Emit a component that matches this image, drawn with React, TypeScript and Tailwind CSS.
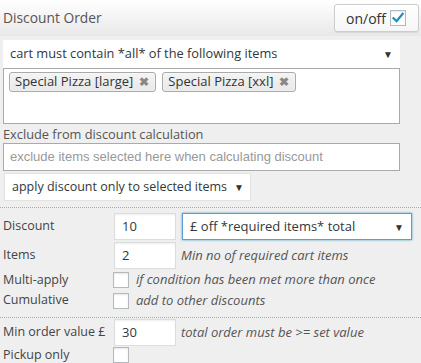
import React from 'react';

const Arrow = () => (
  <span className="text-[10px] leading-none text-[#333]">▼</span>
);

const Box = ({ checked = false }: { checked?: boolean }) => (
  <span className="flex h-4 w-4 items-center justify-center border border-[#b4b9be] bg-white shadow-[inset_0_1px_2px_rgba(0,0,0,0.1)]">
    {checked && (
      <svg width="14" height="14" viewBox="0 0 14 14">
        <path d="M2.5 7.2 L5.6 10.2 L11.6 2.8" fill="none" stroke="#1e8cbe" strokeWidth="2.2" strokeLinecap="square" />
      </svg>
    )}
  </span>
);

const Tag = ({ label }: { label: string }) => (
  <span className="flex h-5 items-center gap-1.5 whitespace-nowrap rounded-[3px] border border-[#aaa] bg-gradient-to-b from-[#f4f4f4] to-[#e8e8e8] pl-[5px] pr-[6px] text-[13px] text-[#333] shadow-[0_0_2px_white_inset]">
    {label}
    <span className="text-[12px] font-bold text-[#888]">✖</span>
  </span>
);

const NumInput = ({ value }: { value: string }) => (
  <div className="flex h-[27px] w-[62px] items-center border border-[#ddd] bg-white pl-[7px] text-[13px] text-[#32373c] shadow-[inset_0_1px_2px_rgba(0,0,0,0.07)]">
    {value}
  </div>
);

const Row = ({ label, children, h }: { label: string; children: React.ReactNode; h: string }) => (
  <div className={`flex items-center whitespace-nowrap ${h}`}>
    <span className="w-[110px] pl-[3px] text-[12.5px] text-[#444]">{label}</span>
    {children}
  </div>
);

export default function App() {
  return (
    <div className="h-[363px] w-[421px] overflow-hidden bg-[#efefef] text-[13px] text-[#444]" style={{ fontFamily: '"Open Sans", sans-serif' }}>
      <div className="flex h-[36px] items-center justify-between bg-gradient-to-b from-white to-[#e8e8e8] pl-[3px] pr-[2px]">
        <span className="text-[13.8px] text-[#555]">Discount Order</span>
        <div className="flex h-[28px] w-[85px] items-center gap-[4px] rounded-[3px] border border-[#ccc] bg-gradient-to-b from-white to-[#f6f6f6] pl-[11px] text-[14px] text-[#333] shadow-[0_1px_1px_rgba(0,0,0,0.08)]">
          on/off
          <Box checked />
        </div>
      </div>

      <div className="px-[3px] pt-[4px]">
        <div className="flex h-[28px] w-[397px] items-center justify-between whitespace-nowrap bg-white pl-[7px] pr-[7px] text-[12.8px] text-[#32373c]">
          cart must contain *all* of the following items
          <Arrow />
        </div>
        <div className="flex h-[56px] w-[397px] items-start gap-[6px] border border-[#aaa] bg-white pl-[5px] pt-[3px]">
          <Tag label="Special Pizza [large]" />
          <Tag label="Special Pizza [xxl]" />
        </div>
        <div className="mt-[1px] text-[12.8px] leading-[18px] text-[#555]">Exclude from discount calculation</div>
        <div className="flex h-[28px] w-[397px] items-center whitespace-nowrap border border-[#aaa] bg-white pl-[6px] text-[13px] text-[#999]" style={{ fontFamily: '"Liberation Sans", Arial, sans-serif' }}>
          exclude items selected here when calculating discount
        </div>
        <div className="ml-[1px] mt-[2px] flex h-[28px] w-[247px] items-center justify-between whitespace-nowrap border border-[#e2e2e2] bg-white pl-[7px] pr-[6px] text-[12.5px] text-[#32373c]">
          apply discount only to selected items
          <Arrow />
        </div>
      </div>

      <div className="mt-[6px] border-t border-dotted border-[#aaa]" />

      <div className="pt-[4px]">
        <Row label="Discount" h="h-[29px]">
          <div className="ml-[4px]"><NumInput value="10" /></div>
          <div className="ml-[6px] flex h-[27px] w-[230px] items-center justify-between border border-[#5b9dd9] bg-white pl-[7px] pr-[7px] text-[13px] text-[#32373c] shadow-[0_0_2px_rgba(30,140,190,0.8)]">
            £ off *required items* total
            <Arrow />
          </div>
        </Row>
        <Row label="Items" h="h-[29px]">
          <div className="ml-[4px]"><NumInput value="2" /></div>
          <span className="ml-[5px] italic text-[#555]">Min no of required cart items</span>
        </Row>
        <Row label="Multi-apply" h="h-[20px]">
          <div className="ml-[3px]"><Box /></div>
          <span className="ml-[7px] italic text-[#555]">if condition has been met more than once</span>
        </Row>
        <Row label="Cumulative" h="h-[21px]">
          <div className="ml-[3px]"><Box /></div>
          <span className="ml-[7px] italic text-[#555]">add to other discounts</span>
        </Row>
      </div>

      <div className="mt-[6px] border-t border-dotted border-[#aaa]" />

      <div className="pt-[1px]">
        <Row label="Min order value £" h="h-[27px]">
          <div className="ml-[4px]"><NumInput value="30" /></div>
          <span className="ml-[5px] italic text-[#555]">total order must be &gt;= set value</span>
        </Row>
        <Row label="Pickup only" h="h-[18px]">
          <div className="ml-[3px]"><Box /></div>
        </Row>
      </div>
    </div>
  );
}
